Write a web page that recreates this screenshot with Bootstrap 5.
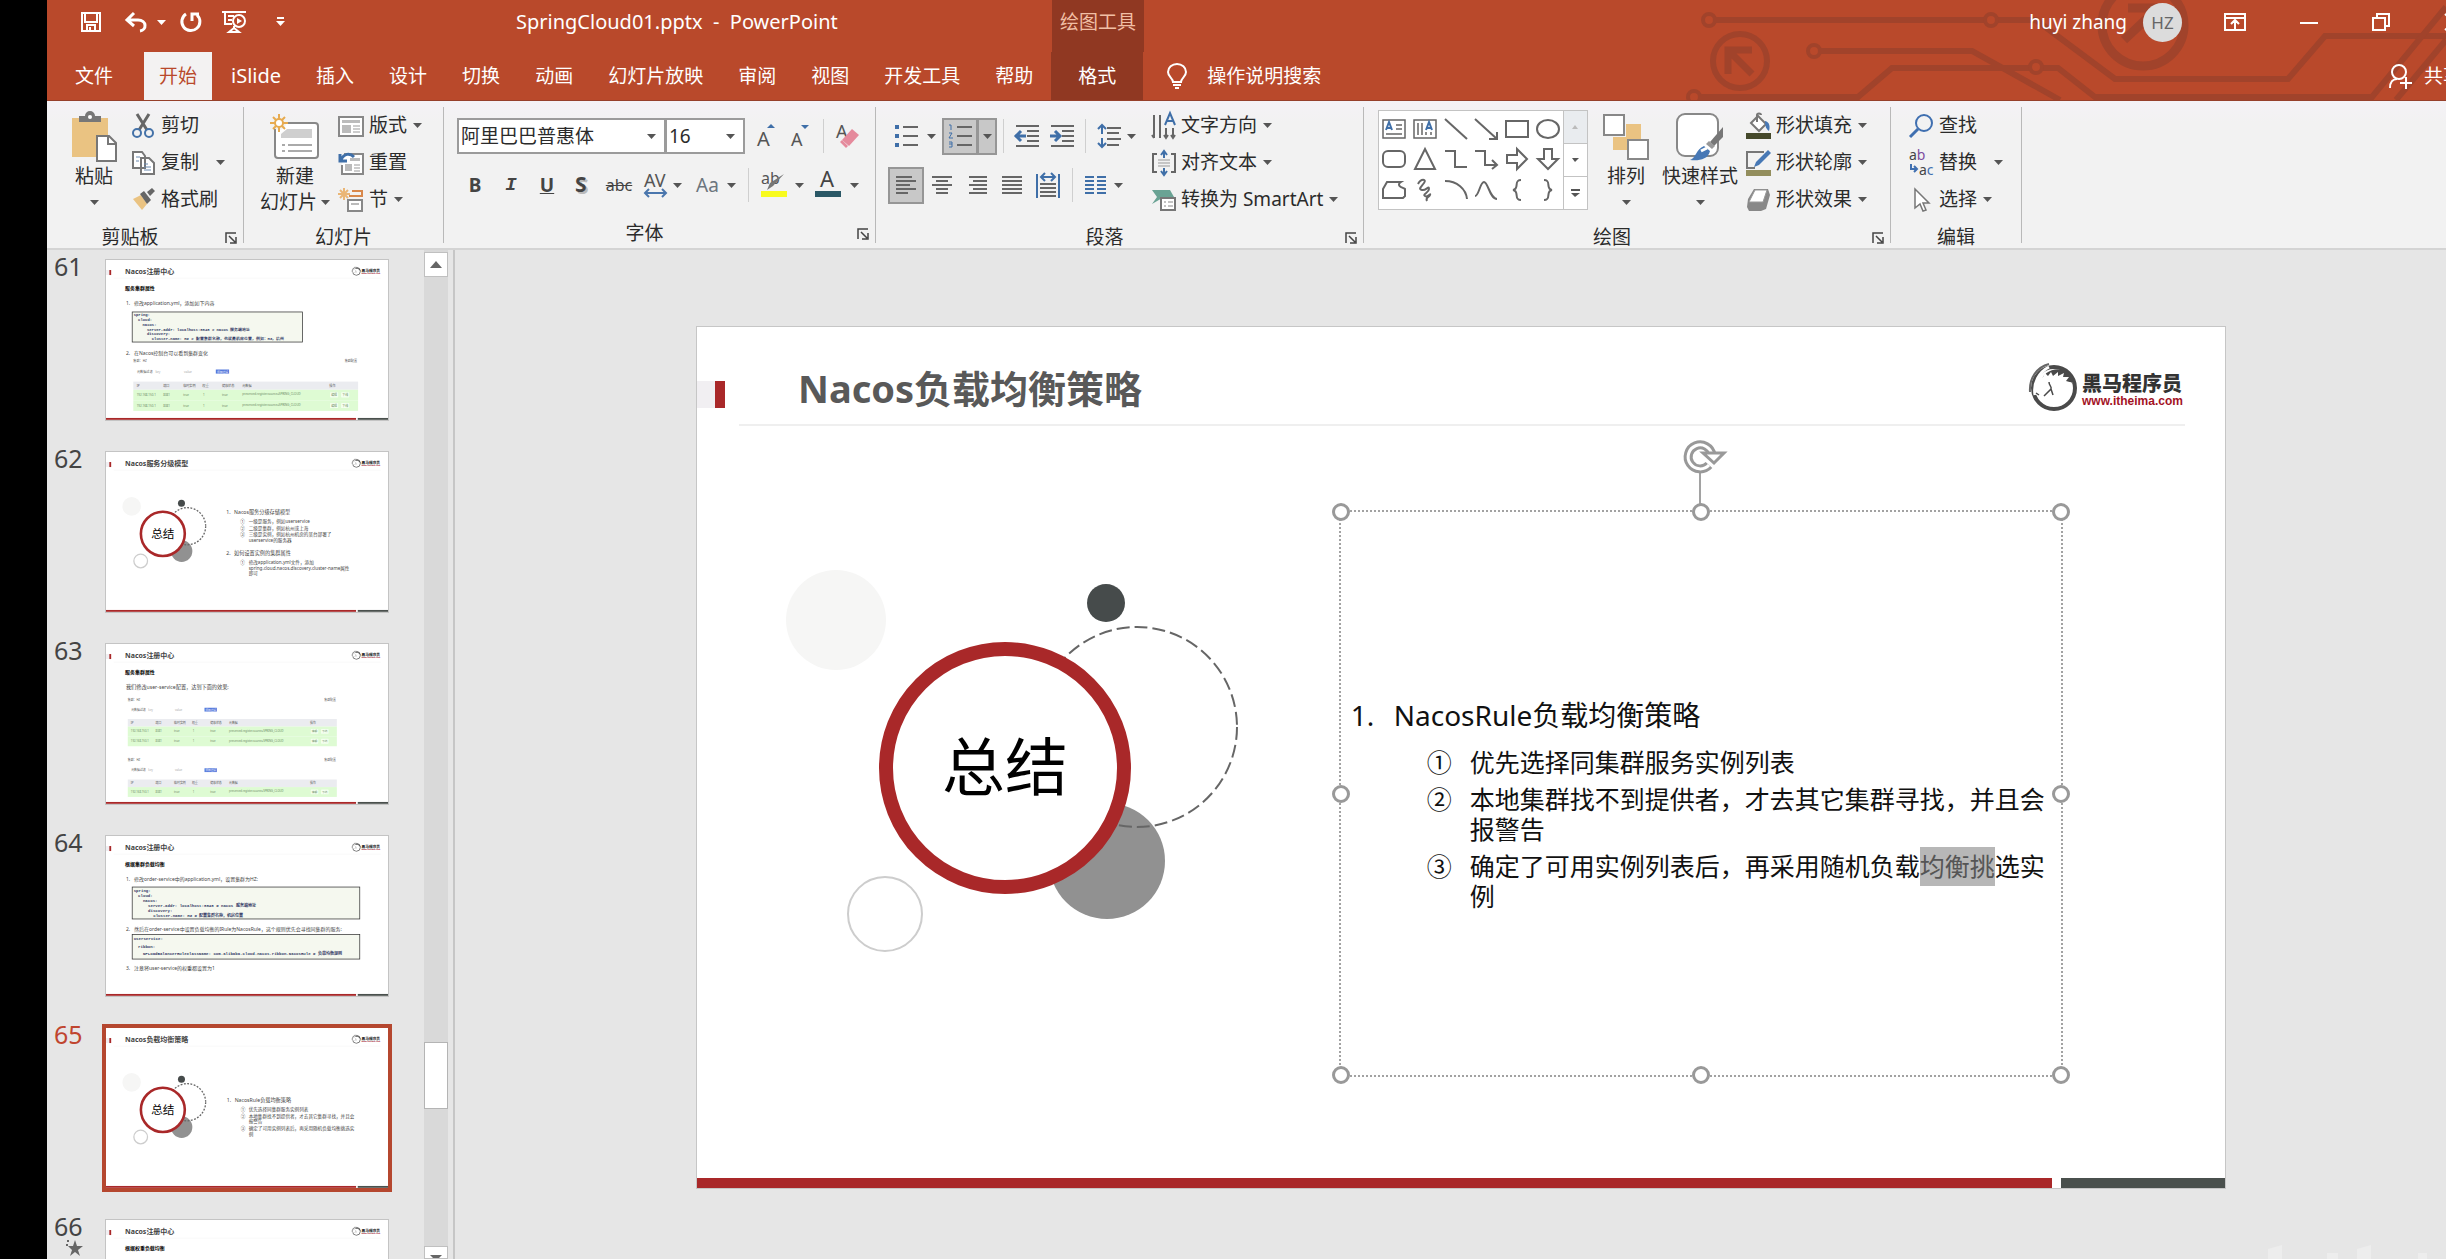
<!DOCTYPE html>
<html lang="zh-CN">
<head>
<meta charset="utf-8">
<meta name="viewport" content="width=device-width, initial-scale=1">
<title>SpringCloud01.pptx - PowerPoint</title>
<link rel="stylesheet" href="https://cdn.jsdelivr.net/npm/bootstrap@5.3.0/dist/css/bootstrap.min.css">
<style>
:root{--brand:#b9492b;--brand-dark:#903822;--ink:#2b2b2b}
body{font-family:"Noto Sans","Noto Sans CJK SC",sans-serif;font-size:19px;line-height:1;color:var(--ink);background:#000;padding-left:47px}
.app{background:#e6e6e6}
button{background:none;border:0;padding:0;color:inherit;font:inherit;line-height:1;display:flex;align-items:center;white-space:nowrap}
svg{display:block;flex:none;overflow:visible}
.caret{width:9px;height:5px;fill:#555}
.caret-light{fill:#fff}
.s2{margin-left:2px}.s5{margin-left:5px}.s6{margin-left:6px}.s8{margin-left:8px}.s9{margin-left:9px}.s11{margin-left:11px}.s12{margin-left:12px}.s14{margin-left:14px}.s20{margin-left:20px}.s42{margin-left:42px}.s54{margin-left:54px}
.latin{font-size:20px}
/* title area */
.top-area{background:var(--brand);color:#fff;height:101px;position:relative;overflow:hidden;border-bottom:1px solid #96402b}
.circuit{position:absolute;right:0;top:0}
.title-row{height:44px;position:relative}
.quick{width:469px;padding-left:34px}
.doc-name{width:536px}
.ctx-title{width:92px;background:var(--brand-dark);color:#f1bfa5;height:52px;align-self:flex-start;padding-bottom:8px}
.avatar-dot{width:39px;height:39px;border-radius:50%;background:#dcdcdc;color:#666;font-size:17px}
.tab-row{height:48px;margin-top:8px;position:relative}
.rib-tab{color:#fff;text-decoration:none;height:48px;padding:0 17px;margin-right:1px;display:flex;align-items:center;white-space:nowrap}
.file-tab{padding:0 28px;margin-right:3px}
.active-tab{background:#f3f2f2;color:var(--brand);padding:0 15px;margin-right:2px}
.ctx-tab{background:var(--brand-dark);width:92px;padding:0;justify-content:center;margin:0}
.over-edge{margin-right:-16px}
/* ribbon */
.ribbon{height:149px;background:linear-gradient(#f4f2f6,#f2f2f2 22px);border-bottom:2px solid #d4d4d4}
.grp{height:136px;margin-top:6px;border-right:1px solid #b9b9b9;display:flex;flex-direction:column;flex:none}
.grp-body{height:109px;display:flex}
.grp-foot{flex:1;display:flex;align-items:center;padding-top:12px}
.grp-foot span{flex:1;text-align:center}
.grp-foot button{width:30px;height:12px;padding-left:12px}
.g-clip{width:197px}.g-clip .grp-body{padding-left:21px}
.g-slide{width:200px}.g-slide .grp-body{padding-left:13px}
.g-font{width:432px}.g-font .grp-body{padding-left:13px}
.g-para{width:488px}.g-para .grp-body{padding-left:12px}
.g-draw{width:527px}.g-draw .grp-body{padding-left:14px}
.g-edit{width:131px}.g-edit .grp-body{padding-left:18px}
.big{flex-direction:column;width:52px;padding-top:4px}
.big .pic{height:52px;display:flex;align-items:center}
.big .ln{height:26px;display:flex;align-items:center;gap:4px}
.big-m{width:76px}.big-l{width:80px}
.col3{display:flex;flex-direction:column;height:111px}
.col3 button{height:37px;gap:5px}
.col3 .caret{margin-left:1px}
.far .caret{margin-left:12px}
.two{padding-top:11px;display:flex;flex-direction:column;gap:13px}
.rw{height:36px;display:flex;align-items:center}
.bar{width:1px;height:34px;background:#cfcfcf}
.chr{width:36px;justify-content:center;color:#444;height:36px}
.combo{height:36px;border:2px solid #9b9b9b;border-radius:0;background:#fff url("data:image/svg+xml,%3Csvg xmlns='http://www.w3.org/2000/svg' width='9' height='5'%3E%3Cpath d='M0 0h9L4.5 5z' fill='%23555'/%3E%3C/svg%3E") no-repeat right 8px center;appearance:none;padding:0 2px;color:var(--ink);font:inherit;line-height:1}
.combo-font{width:209px}.combo-size{width:80px;margin-left:-1px}
.on{background:#c8c8c8;border:2px solid #969696;justify-content:center;height:37px}
.on-a{width:36px}.on-b{width:20px;margin-left:-1px}
.para-l{width:264px}
.gallery{width:210px;height:100px;margin-top:3px;background:#fff;border:1px solid #c3c3c3;display:flex}
.gallery-grid{flex:1;display:grid;grid-template-columns:repeat(6,1fr);padding:3px 0 3px 0}
.gallery-grid button{justify-content:center}
.gallery-side{width:24px;display:flex;flex-direction:column}
.gallery-side button{flex:1;justify-content:center;border:1px solid #c3c3c3;border-width:0 0 1px 1px}
.gallery-side button:last-child{border-bottom:0}
.ln1{fill:none;stroke:#666;stroke-width:2}
.bl{stroke:#3f6fa8}
/* slide list */
.thumbs{width:377px;overflow:hidden;padding:10px 0 0 7px}
.thumb-item{height:192px;flex:none;display:flex}
.thumb-no{width:52px;font-size:25px;line-height:26px;margin-top:-7px;color:#444}
.thumb-pic{width:282px;height:160px;background:#fff;box-shadow:0 0 0 1px #c4c4c4;--thin:7px;--dash:10px 8px}
.sel .thumb-no{color:#c0452f}
.sel .thumb-pic{box-shadow:none;outline:4px solid #b5472f}
.scroll-col{width:24px;background:#d9d9d9;padding-top:2px}
.scroll-col button{width:24px;height:25px;background:#fff;border:1px solid #c0c0c0;justify-content:center}
.thumb-handle{height:67px;background:#fff;border:1px solid #b4b4b4;margin-top:765px}
.pane-edge{width:7px;border-right:2px solid #c6c6c6}
svg text{white-space:pre}
.thin{stroke-width:var(--thin,2px)}
.dashed{stroke-dasharray:var(--dash,13px 5px)}
/* slide */
.stage{padding:77px 221px 0 242px}
.slide{position:relative;aspect-ratio:1528/861;background:#fff;box-shadow:0 0 0 1px #c6c6c6}
.slide-art{position:absolute;inset:0;width:100%;height:100%}
.slide-title{position:relative;font-size:38px;font-weight:700;line-height:48px;color:#595959;margin:0;padding:37px 0 0 101px}
.slide-box{position:absolute;left:42%;top:21.3%;width:47.4%;height:65.8%;border:2px dotted #a2a2a2;padding:186px 8px 0 10px;color:#111}
.slide-box ol{list-style:none;margin:0;padding:0}
.lv1{font-size:28px;line-height:34px}
.lv1>li>div{display:flex}
.lv1>li>div>b{font-weight:400;width:43px}
.lv2{font-size:25px;line-height:30px;padding:8px 0 0 76px!important}
.lv2 li{display:flex;margin-top:7px}
.lv2 li>b{font-weight:400;width:43px;flex:none}
.picked{background:#b7b7b7;color:#555;box-shadow:0 3px #b7b7b7,0 -2px #b7b7b7}
.knob{position:absolute;width:18px;height:18px;border:3px solid #999;border-radius:50%;background:#fff;transform:translate(-50%,-50%)}
.k-l{left:0}.k-c{left:50%}.k-r{left:100%}.k-t{top:0}.k-m{top:50%}.k-b{top:100%}
.turn{position:absolute;left:50%;top:-74px;margin-left:-18px}
.mark-frag{position:absolute;right:0;bottom:0}
</style>
<script src="https://cdn.jsdelivr.net/npm/bootstrap@5.3.0/dist/js/bootstrap.bundle.min.js"></script>
</head>
<body class="vh-100 overflow-hidden">
<svg width="0" height="0" class="position-absolute" aria-hidden="true">
<defs>
<symbol id="caret" viewBox="0 0 9 5"><path d="M0 0h9L4.500 5z"/></symbol>
<symbol id="launch" viewBox="0 0 12 12"><path d="M1 11V1h10M4 4l6 6M11 5v6H5" fill="none" stroke="#444" stroke-width="1.500"/></symbol>
<g id="logo">
<circle cx="25" cy="24" r="21" fill="none" stroke="#4a4a4a" stroke-width="4"/>
<path d="M11 20C13 8 25 3 34 6c8 3 12 9 13 17l-6-5z" fill="#4a4a4a"/>
<path d="M5 31C5 20 10 14 14 13l2-4 3 3 3-4 2 4 5-4v4l6-3-1 4 6 0-3 4 7 2-6 3c4 8-2 18-14 18-9 0-15-5-15-11z" fill="#fff"/>
<path d="M6 31C4 19 10 8 20 3" fill="none" stroke="#fff" stroke-width="3"/>
<path d="M1 28C0 14 8 3 20 0" fill="none" stroke="#666" stroke-width="2"/>
<path d="M20 18c0 4 3 4 2 7l-7 7M22 25l2 6M7 29l3 2" fill="none" stroke="#4a4a4a" stroke-width="1.500"/>
<text x="53" y="27" font-size="20" font-weight="900" fill="#333">黑马程序员</text>
<text x="53" y="41" font-size="12" font-weight="700" font-family="Liberation Sans" fill="#a3121f">www.itheima.com</text>
</g>
<g id="frame">
<rect y="54" width="18" height="27" fill="#f1eff2"/><rect x="18" y="54" width="10" height="27" fill="#a92829"/>
<path d="M42 98H1488" stroke="#efefef" stroke-width="2"/>
<rect y="851" width="1355" height="10" fill="#a92829"/><rect x="1364" y="851" width="164" height="10" fill="#4a504d"/>
<use href="#logo" x="1332" y="37"/>
</g>
<g id="rings">
<circle cx="139" cy="293" r="50" fill="#f6f6f5"/><circle cx="409" cy="276" r="19" fill="#464b4b"/>
<circle cx="410" cy="534" r="58" fill="#919191"/>
<circle class="thin dashed" cx="440" cy="400" r="100" fill="none" stroke="#666"/>
<circle cx="308" cy="441" r="119" fill="#fff" stroke="#a92829" stroke-width="14"/>
<circle class="thin" cx="188" cy="587" r="37" fill="none" stroke="#cdcdcd"/>
<text x="308" y="463" font-size="63" text-anchor="middle" fill="#000">总结</text>
</g>
<g id="svc" font-size="17" fill="#555">
<text x="0" y="8">集群：HZ</text><text x="1145" y="8">集群配置</text>
<text x="20" y="68">元数据过滤</text><text x="120" y="68" fill="#aaa">key</text><text x="275" y="68" fill="#aaa">value</text>
<rect x="447" y="50" width="72" height="22" fill="#5578dc"/><text x="453" y="67" font-size="15" fill="#fff">添加过滤</text>
<rect y="115" width="1218" height="44" fill="#ebecf0"/>
<text x="18" y="143">IP</text><text x="162" y="143">端口</text><text x="270" y="143">临时实例</text><text x="374" y="143">权重</text><text x="480" y="143">健康状态</text><text x="590" y="143">元数据</text><text x="1062" y="143">操作</text>
</g>
<g id="svcRow" font-size="16" fill="#6b8a63">
<rect width="1218" height="57" fill="#defbd3"/>
<text x="18" y="34">192.168.150.1</text><text x="162" y="34">8081</text><text x="270" y="34">true</text><text x="378" y="34">1</text><text x="480" y="34">true</text><text x="590" y="30">preserved.register.source=SPRING_CLOUD</text>
<rect x="1066" y="14" width="44" height="28" rx="4" fill="#f4fff0"/><text x="1072" y="34">编辑</text><rect x="1126" y="14" width="44" height="28" rx="4" fill="#f4fff0"/><text x="1132" y="34">下线</text>
</g>
</defs>
</svg>

<div class="app vh-100 d-flex flex-column overflow-hidden">
<header class="top-area flex-shrink-0">
<svg class="circuit" width="780" height="100" viewBox="0 0 780 100" fill="none" stroke="#a1432b" stroke-width="6">
<circle cx="43" cy="20" r="6" stroke-width="4"/><path d="M50 20H318M332 20h38l79 59h173l37-43h121"/><circle cx="325" cy="20" r="6" stroke-width="4"/>
<circle cx="148" cy="51" r="6" stroke-width="4"/><path d="M155 51h151l88 49"/>
<circle cx="28" cy="97" r="6" stroke-width="4"/><path d="M35 97h157l34-29h137M377 68h15l37 29h277l74-90M730 100l50-60"/><circle cx="370" cy="67" r="6" stroke-width="4"/>
<circle cx="74" cy="61" r="27"/><path d="M62 74V50h24M64 52l22 22" stroke-width="7"/>
<circle cx="477" cy="25" r="41" stroke-width="9"/><path d="M462 8h30v30M490 10l-32 30" stroke-width="9"/>
</svg>
<div class="title-row d-flex align-items-center">
<div class="quick d-flex align-items-center">
<button aria-label="保存"><svg width="20" height="20" viewBox="0 0 20 20" fill="none" stroke="#fff" stroke-width="2"><path d="M1 1h18v18H1zM4 1v9h12V1M6 19v-6h8v6M9 15v3"/></svg></button>
<button class="ms-4" aria-label="撤消"><svg width="23" height="20" viewBox="0 0 23 20"><path d="M9 1 2 8l7 6M3 8h10c9 0 9 10 2 11" fill="none" stroke="#fff" stroke-width="3"/></svg><svg class="caret caret-light s9"><use href="#caret"/></svg></button>
<button class="s14" aria-label="恢复"><svg width="22" height="20" viewBox="0 0 22 20"><path d="M6 2a9 9 0 1 0 11 1M12 9V2h7" fill="none" stroke="#fff" stroke-width="3"/></svg></button>
<button class="s20" aria-label="从头开始"><svg width="24" height="22" viewBox="0 0 24 22" fill="none" stroke="#fff" stroke-width="2"><path d="M0 1h24M3 1v12h7M6 5h6M6 9h4M12 15v3M7 21l5-4 5 4z"/><circle cx="17" cy="10" r="6"/><path d="M15 7v6l5-3z" fill="#fff" stroke="none"/></svg></button>
<button class="ms-4" aria-label="自定义"><svg class="s6" width="9" height="10" viewBox="0 0 9 10"><path d="M1 1h7" stroke="#fff" stroke-width="2"/><path d="M0 4h9L4.500 9z" fill="#fff"/></svg></button>
</div>
<div class="doc-name latin">SpringCloud01.pptx&nbsp; -&nbsp; PowerPoint</div>
<div class="ctx-title d-flex align-items-center justify-content-center">绘图工具</div>
<div class="ms-auto d-flex align-items-center">
<span>huyi zhang</span><span class="avatar-dot ms-3 d-flex align-items-center justify-content-center">HZ</span>
<button class="s42" aria-label="功能区显示选项"><svg width="22" height="18" viewBox="0 0 22 18" fill="none" stroke="#fff" stroke-width="2"><path d="M1 1h20v16H1zM1 5h20M11 16V8M7 11l4-4 4 4"/></svg></button>
<button class="s54" aria-label="最小化"><svg width="18" height="18"><path d="M0 10h18" stroke="#fff" stroke-width="2"/></svg></button>
<button class="s54" aria-label="还原"><svg width="18" height="18" viewBox="0 0 18 18" fill="none" stroke="#fff" stroke-width="2"><path d="M1 5h12v12H1zM5 5V1h12v12h-4"/></svg></button>
<button class="ms-5" aria-label="关闭"><svg width="8" height="18"><path d="M7 1 24 17M24 1 7 17" stroke="#fff" stroke-width="2"/></svg></button>
</div>
</div>
<nav class="tab-row d-flex" aria-label="功能区">
<a class="rib-tab file-tab" href="#">文件</a><a class="rib-tab active-tab" href="#" aria-current="page">开始</a>
<a class="rib-tab latin" href="#">iSlide</a><a class="rib-tab" href="#">插入</a><a class="rib-tab" href="#">设计</a><a class="rib-tab" href="#">切换</a><a class="rib-tab" href="#">动画</a><a class="rib-tab" href="#">幻灯片放映</a><a class="rib-tab" href="#">审阅</a><a class="rib-tab" href="#">视图</a><a class="rib-tab" href="#">开发工具</a><a class="rib-tab" href="#">帮助</a><a class="rib-tab ctx-tab" href="#">格式</a>
<button class="ms-4"><svg width="20" height="26" viewBox="0 0 20 26" fill="none" stroke="#fff" stroke-width="2"><path d="M6 19c0-4-5-5-5-10a9 8 0 0 1 18 0c0 5-5 6-5 10zM6 22h8M8 25h4"/></svg><span class="s20">操作说明搜索</span></button>
<button class="ms-auto over-edge" aria-label="共享"><svg width="23" height="25" viewBox="0 0 23 25" fill="none" stroke="#fff" stroke-width="2"><circle cx="10" cy="8" r="7"/><path d="M1 24c0-6 3-9 7-9M11 19h12M17 13v12"/></svg><span class="s12">共享</span></button>
</nav>
</header>

<div class="ribbon d-flex overflow-hidden flex-shrink-0">
<section class="grp g-clip"><div class="grp-body">
<button class="big"><span class="pic"><svg width="44" height="50" viewBox="0 0 44 50"><path d="M0 6h36v39H0z" fill="#eac382"/><path d="M7 10V4h6a5 5 0 0 1 10 0h6v6z" fill="#777"/><circle cx="18" cy="5" r="2" fill="#fff"/><path d="M25 24h12l7 7v18H25z" fill="#fff" stroke="#777" stroke-width="2"/><path d="M36 24v8h8" fill="none" stroke="#777" stroke-width="2"/></svg></span><span class="ln">粘贴</span><span class="ln"><svg class="caret"><use href="#caret"/></svg></span></button>
<div class="col3 s12">
<button><svg width="24" height="24" viewBox="0 0 24 24" fill="none"><path d="M5 0l10 16M17 0 7 16" stroke="#666" stroke-width="3"/><circle cx="5" cy="19" r="4" stroke="#4472a8" stroke-width="2"/><circle cx="17" cy="19" r="4" stroke="#4472a8" stroke-width="2"/></svg>剪切</button>
<button class="far"><svg width="24" height="24" viewBox="0 0 24 24" fill="#fff" stroke="#777" stroke-width="2"><path d="M1 1h9l3 4v12H1zM9 7h8l5 5v11H9z"/><path d="M4 6h4M4 10h3M12 13h4M12 16h7M12 19h7" stroke="#6a8ab0" stroke-width="1"/></svg>复制<svg class="caret"><use href="#caret"/></svg></button>
<button><svg width="24" height="22" viewBox="0 0 24 22"><path d="M1 10l8-4 6 9-5 6z" fill="#eac382"/><path d="M8 5l4-3 7 9-4 4zM15 3l5-4 3 3-5 5z" fill="#666"/></svg>格式刷</button></div></div>
<div class="grp-foot"><span>剪贴板</span><button aria-label="剪贴板设置"><svg width="12" height="12"><use href="#launch"/></svg></button></div></section>

<section class="grp g-slide"><div class="grp-body">
<button class="big big-m"><span class="pic"><svg width="50" height="46" viewBox="0 0 50 46"><rect x="5" y="9" width="43" height="35" rx="3" fill="#fff" stroke="#888" stroke-width="2"/><path d="M17 15h25v9H11v-4z" fill="#cfcfcf"/><path d="M12 31h3M18 31h24M12 37h3M18 37h24" stroke="#aaa" stroke-width="2"/><circle cx="9" cy="9" r="7" fill="#f2f2f2"/><path d="M9 0v18M0 9h18M3 3l12 12M15 3 3 15" stroke="#e7ab50" stroke-width="2"/><circle cx="9" cy="9" r="4" fill="#fff" stroke="#e7ab50" stroke-width="2"/></svg></span><span class="ln">新建</span><span class="ln">幻灯片<svg class="caret"><use href="#caret"/></svg></span></button>
<div class="col3 s5">
<button><svg width="26" height="22" viewBox="0 0 26 22"><path d="M1 2h24v19H1z" fill="#fff" stroke="#888" stroke-width="2"/><path d="M4 5h18v3H4zM4 10h9v8H4z" fill="#bbb"/><path d="M15 11h7M15 14h7M15 17h7" stroke="#999"/></svg>版式<svg class="caret"><use href="#caret"/></svg></button>
<button><svg width="26" height="24" viewBox="0 0 26 24"><path d="M6 3h19v20H4v-9" fill="#fff" stroke="#888" stroke-width="2"/><path d="M12 7h10v3H12zM7 13h7v7H7z" fill="#bbb"/><path d="M16 14h6M16 17h6M16 20h6" stroke="#999"/><path d="M2 3v7h7M3 9c3-7 9-7 13-3" fill="none" stroke="#3f6fa8" stroke-width="3"/></svg>重置</button>
<button><svg width="26" height="24" viewBox="0 0 26 24"><path d="M14 3h10v5H11" fill="none" stroke="#d8884b" stroke-width="2"/><path d="M10 12h14v11H10z" fill="#fff" stroke="#888" stroke-width="2"/><path d="M13 15h8v2h-8z" fill="#bbb"/><path d="M6 0v12M0 6h12M2 2l8 8M10 2l-8 8" stroke="#eab676" stroke-width="2"/></svg>节<svg class="caret"><use href="#caret"/></svg></button></div></div>
<div class="grp-foot"><span>幻灯片</span></div></section>

<section class="grp g-font"><div class="grp-body"><div class="two">
<div class="rw"><select class="combo combo-font" aria-label="字体"><option>阿里巴巴普惠体</option></select><select class="combo combo-size" aria-label="字号"><option>16</option></select>
<button class="s12" aria-label="增大字号"><svg width="20" height="24"><text x="0" y="22" font-size="20" fill="#555">A</text><path d="M10 4l4-4 4 4z" fill="#3f6fa8"/></svg></button>
<button class="s14" aria-label="减小字号"><svg width="20" height="24"><text x="0" y="22" font-size="18" fill="#555">A</text><path d="M10 1h8l-4 4z" fill="#3f6fa8"/></svg></button>
<span class="bar s12"></span>
<button class="s12" aria-label="清除格式"><svg width="24" height="26"><text x="0" y="15" font-size="18" fill="#555">A</text><path d="M6 17 16 6l7 6-10 11z" fill="#e58a9c"/><path d="M4 19l2-2 6 6-2 2z" fill="#e58a9c"/></svg></button></div>
<div class="rw"><button class="chr fw-bold">B</button><button class="chr fw-bold fst-italic font-monospace">I</button><button class="chr fw-bold text-decoration-underline">U</button><button class="chr fw-bold"><svg width="18" height="22"><text x="3" y="20" font-size="21" fill="#bbb" aria-hidden="true">S</text><text x="1" y="18" font-size="21" fill="#444">S</text></svg></button><button class="chr text-decoration-line-through fs-6">abc</button><button class="chr" aria-label="字符间距"><svg width="23" height="26"><text x="0" y="15" font-size="18" fill="#555">AV</text><path d="M1 21h21M5 17l-4 4 4 4M18 17l4 4-4 4" fill="none" stroke="#4a76ad" stroke-width="2"/></svg></button><svg class="caret"><use href="#caret"/></svg>
<button class="s14 text-secondary" aria-label="更改大小写">Aa</button><svg class="caret s8"><use href="#caret"/></svg><span class="bar s12"></span>
<button class="s12" aria-label="突出显示"><svg width="26" height="28"><text x="0" y="13" font-size="16" fill="#555">ab</text><path d="M23 3 12 15l-6 4 3-7z" fill="#777"/><path d="M0 20h26v6H0z" fill="#f8fb1e"/></svg></button><svg class="caret s8"><use href="#caret"/></svg>
<button class="s11" aria-label="字体颜色"><svg width="26" height="28"><text x="5" y="16" font-size="22" fill="#444">A</text><path d="M0 20h26v6H0z" fill="#2a5866"/></svg></button><svg class="caret s9"><use href="#caret"/></svg></div>
</div></div><div class="grp-foot"><span>字体</span><button aria-label="字体设置"><svg width="12" height="12"><use href="#launch"/></svg></button></div></section>

<section class="grp g-para"><div class="grp-body"><div class="two para-l">
<div class="rw"><button class="s6" aria-label="项目符号"><svg width="24" height="24" class="ln1"><path d="M9 3h15M9 12h15M9 21h15"/><path d="M1 3h4M1 12h4M1 21h4" class="bl" stroke-width="4"/></svg></button><svg class="caret s9"><use href="#caret"/></svg>
<button class="on on-a s6" aria-label="编号"><svg width="24" height="24" class="ln1"><path d="M9 3h15M9 12h15M9 21h15"/><path d="M1 1h2v5M1 9h3l-3 5h4M1 18h3v5H1M1 20h3" class="bl" stroke-width="1"/></svg></button><button class="on on-b" aria-label="编号选项"><svg class="caret"><use href="#caret"/></svg></button><span class="bar s6"></span>
<button class="s11" aria-label="减少缩进"><svg width="24" height="24" class="ln1"><path d="M1 2h23M12 7h12M12 12h12M12 17h12M1 22h23"/><path d="M0 12h11M6 7l-5 5 5 5" class="bl" stroke-width="3"/></svg></button>
<button class="s11" aria-label="增加缩进"><svg width="24" height="24" class="ln1"><path d="M1 2h23M12 7h12M12 12h12M12 17h12M1 22h23"/><path d="M0 12h10M5 7l5 5-5 5" class="bl" stroke-width="3"/></svg></button><span class="bar s11"></span>
<button class="s11" aria-label="行距"><svg width="24" height="26" class="ln1"><path d="M10 5h14M10 10h12M10 16h14M10 22h12"/><path d="M5 2v9M5 15v9M1 6l4-4 4 4M1 20l4 4 4-4" class="bl"/></svg></button><svg class="caret s6"><use href="#caret"/></svg></div>
<div class="rw"><button class="on on-a" aria-label="左对齐"><svg width="22" height="20" class="ln1"><path d="M1 2h16M1 6h20M1 10h14M1 14h20M1 18h12"/></svg></button>
<button class="s6" aria-label="居中"><svg width="24" height="20" class="ln1"><path d="M2 2h20M6 6h12M2 10h20M6 14h12M6 18h12"/></svg></button>
<button class="s11" aria-label="右对齐"><svg width="24" height="20" class="ln1"><path d="M4 2h18M8 6h14M4 10h18M8 14h14M4 18h18"/></svg></button>
<button class="s11" aria-label="两端对齐"><svg width="24" height="20" class="ln1"><path d="M2 2h20M2 6h20M2 10h20M2 14h20M2 18h20"/></svg></button>
<button class="s12" aria-label="分散对齐"><svg width="24" height="26" class="ln1"><path d="M4 12h16M4 16h16M4 20h16M4 24h16"/><path d="M1 2v24M23 2v24M5 5h14M9 1L5 5l4 4M15 1l4 4-4 4" class="bl"/></svg></button><span class="bar s12"></span>
<button class="s11" aria-label="分栏"><svg width="24" height="20" class="ln1"><path d="M1 2h9M1 6h9M1 10h9M1 14h9M1 18h9M13 2h9M13 6h9M13 10h9M13 14h9M13 18h9" class="bl"/></svg></button><svg class="caret s6"><use href="#caret"/></svg></div></div>
<div class="col3">
<button><svg width="24" height="26" class="ln1"><path d="M2 2v23M8 2v23M14 15v10M21 15v10M0 22l2 3M12 22l2 3 2-3M19 22l2 3 2-3"/><path d="M13 12l5-12 5 12M15 8h6" class="bl"/></svg>文字方向<svg class="caret"><use href="#caret"/></svg></button>
<button><svg width="24" height="24" class="ln1"><path d="M5 3H1v18h4M19 3h4v18h-4"/><path d="M6 12h12M6 9h12M6 15h12" stroke="#999" stroke-width="1"/><path d="M12 0v7M12 17v7M9 4l3-4 3 4M9 20l3 4 3-4" class="bl"/></svg>对齐文本<svg class="caret"><use href="#caret"/></svg></button>
<button><svg width="24" height="22" viewBox="0 0 24 22"><path d="M0 1h18l4 7H12L0 15l5-7z" fill="#6aa394"/><path d="M9 9h14v12H9z" fill="#fff" stroke="#777" stroke-width="2"/><path d="M12 13h2M16 13h5M12 17h2M16 17h5" stroke="#888"/></svg>转换为 SmartArt<svg class="caret"><use href="#caret"/></svg></button></div></div>
<div class="grp-foot"><span>段落</span><button aria-label="段落设置"><svg width="12" height="12"><use href="#launch"/></svg></button></div></section>

<section class="grp g-draw"><div class="grp-body">
<div class="gallery"><div class="gallery-grid">
<button aria-label="文本框"><svg width="24" height="20" class="ln1"><path d="M1 1h22v18H1zM14 6h6M14 10h6M4 15h16" stroke-width="1.500"/><path d="M4 11l3-8 3 8M5 9h4" class="bl"/></svg></button>
<button aria-label="竖排文本框"><svg width="24" height="20" class="ln1"><path d="M1 1h22v18H1zM5 4v12M9 4v12M13 13v3M18 13v3" stroke-width="1.500"/><path d="M13 11l3-8 3 8M14 9h4" class="bl"/></svg></button>
<button aria-label="直线"><svg width="24" height="22" class="ln1"><path d="M1 1l22 20"/></svg></button>
<button aria-label="箭头"><svg width="24" height="22" class="ln1"><path d="M1 1l22 20M23 14v7h-8"/></svg></button>
<button aria-label="矩形"><svg width="24" height="20" class="ln1"><path d="M1 2h22v16H1z"/></svg></button>
<button aria-label="椭圆"><svg width="24" height="20" class="ln1"><ellipse cx="12" cy="10" rx="11" ry="9"/></svg></button>
<button aria-label="圆角矩形"><svg width="24" height="20" class="ln1"><rect x="1" y="2" width="22" height="16" rx="5"/></svg></button>
<button aria-label="三角形"><svg width="24" height="22" class="ln1"><path d="M12 1l10 20H2z"/></svg></button>
<button aria-label="肘形连接符"><svg width="24" height="20" class="ln1"><path d="M1 2h10v16h12"/></svg></button>
<button aria-label="肘形箭头"><svg width="24" height="20" class="ln1"><path d="M1 2h10v14h12M18 11l5 5-5 4"/></svg></button>
<button aria-label="右箭头"><svg width="24" height="22" class="ln1"><path d="M2 7h10V1l10 10-10 10v-6H2z"/></svg></button>
<button aria-label="下箭头"><svg width="24" height="22" class="ln1"><path d="M8 1h8v10h6L12 21 2 11h6z"/></svg></button>
<button aria-label="任意多边形"><svg width="24" height="20" class="ln1"><path d="M5 2h14c-6 4 3 6 4 7v7l-2 2H1V9z"/></svg></button>
<button aria-label="自由曲线"><svg width="24" height="24" class="ln1"><path d="M5 6c3-6 9-5 6-1s-6 6-2 7 7-5 7-1-7 5-4 7 6-4 5-1-5 2-3 6"/></svg></button>
<button aria-label="弧形"><svg width="24" height="20" class="ln1"><path d="M1 1c12 0 21 8 22 18"/></svg></button>
<button aria-label="曲线"><svg width="24" height="20" class="ln1"><path d="M1 16C5 16 6 2 10 2s6 17 13 17"/></svg></button>
<button aria-label="左大括号"><svg width="24" height="22" class="ln1"><path d="M16 1c-8 0-1 9-8 10 7 1 0 10 8 10"/></svg></button>
<button aria-label="右大括号"><svg width="24" height="22" class="ln1"><path d="M8 1c8 0 1 9 8 10-7 1 0 10-8 10"/></svg></button>
</div><div class="gallery-side"><button class="bg-body-secondary" aria-label="上一行"><svg width="7" height="4"><path d="M0 4l3-4 3 4z" fill="#bbb"/></svg></button><button aria-label="下一行"><svg width="7" height="4"><path d="M0 0h7L3 4z" fill="#555"/></svg></button><button aria-label="更多形状"><svg width="9" height="8"><path d="M0 0h9v2H0zM0 4h9L4 8z" fill="#555"/></svg></button></div></div>
<button class="big s12"><span class="pic"><svg width="46" height="46" viewBox="0 0 46 46"><path d="M23 10h15v26H10V23h13z" fill="#eac382"/><path d="M1 1h20v20H1zM25 26h20v19H25z" fill="#fff" stroke="#888" stroke-width="2"/></svg></span><span class="ln">排列</span><span class="ln"><svg class="caret"><use href="#caret"/></svg></span></button>
<button class="big big-l s8"><span class="pic"><svg width="48" height="48" viewBox="0 0 48 48"><rect x="1" y="1" width="41" height="42" rx="8" fill="#fff" stroke="#888" stroke-width="2"/><path d="M47 14v10l-9 9-4-4z" fill="#777"/><path d="M33 28l6 5-3 3-6-5z" fill="#999"/><path d="M14 47c6-2 6-11 14-14l6 5c-2 9-12 10-20 9z" fill="#4778b5"/><path d="M25 38l6-3" stroke="#fff" stroke-width="3"/></svg></span><span class="ln">快速样式</span><span class="ln"><svg class="caret"><use href="#caret"/></svg></span></button>
<div class="col3 s6">
<button><svg width="25" height="26" viewBox="0 0 25 26"><path d="M5 10l7-7 8 8-7 7z" fill="#fff" stroke="#777" stroke-width="2"/><path d="M11 9V2c0-2 4-2 4 0" fill="none" stroke="#777" stroke-width="2"/><path d="M19 8c5 1 5 6 4 10-3-2-4-5-4-10z" fill="#4778b5"/><path d="M0 20h25v6H0z" fill="#45492b"/></svg>形状填充<svg class="caret"><use href="#caret"/></svg></button>
<button><svg width="25" height="26" viewBox="0 0 25 26"><path d="M18 2H1v16h8" fill="none" stroke="#777" stroke-width="2"/><path d="M22 0l3 3-12 12-5 2 2-5z" fill="#4778b5"/><path d="M0 20h25v6H0z" fill="#938e5d"/></svg>形状轮廓<svg class="caret"><use href="#caret"/></svg></button>
<button><svg width="25" height="24" viewBox="0 0 25 24"><path d="M8 1h14l2 6-4 14-5 2H3l-2-4 1-8z" fill="#888"/><path d="M9 2h12l-4 12H3z" fill="#fff" stroke="#999"/></svg>形状效果<svg class="caret"><use href="#caret"/></svg></button></div></div>
<div class="grp-foot"><span>绘图</span><button aria-label="绘图设置"><svg width="12" height="12"><use href="#launch"/></svg></button></div></section>

<section class="grp g-edit"><div class="grp-body"><div class="col3">
<button><svg width="25" height="24" viewBox="0 0 25 24" fill="none" stroke="#3f6fb0"><circle cx="15" cy="9" r="8" stroke-width="2"/><path d="M9 15l-8 8" stroke-width="3"/></svg>查找</button>
<button class="far"><svg width="25" height="28" viewBox="0 0 25 28"><text x="0" y="11" font-size="14" fill="#444">a<tspan fill="#7d4da0">b</tspan></text><text x="10" y="26" font-size="14" fill="#444">a<tspan fill="#3f6fb0">c</tspan></text><path d="M2 15v5h6M5 17l3 3-3 3" fill="none" stroke="#3f6fb0" stroke-width="2"/></svg>替换<svg class="caret"><use href="#caret"/></svg></button>
<button><svg width="25" height="24" viewBox="0 0 25 24"><path d="M6 1v19l5-4 3 7 3-1-3-7h6z" fill="#fff" stroke="#777" stroke-width="1.500"/></svg>选择<svg class="caret"><use href="#caret"/></svg></button></div></div>
<div class="grp-foot"><span>编辑</span></div></section>
</div>

<main class="flex-grow-1 d-flex overflow-hidden position-relative">
<div class="thumbs d-flex flex-column flex-shrink-0">
<div class="thumb-item"><div class="thumb-no">61</div><svg class="thumb-pic" viewBox="0 0 1528 862" preserveAspectRatio="none"><use href="#frame"/>
<text x="103" y="77" font-size="38" font-weight="700" fill="#444">Nacos注册中心</text><text x="103" y="160" font-size="27" font-weight="700">服务集群属性</text>
<g font-size="27" fill="#444"><text x="108" y="244">1.</text><text x="152" y="244">修改application.yml，添加如下内容</text><text x="108" y="514">2.</text><text x="152" y="514">在Nacos控制台可以看到集群变化</text></g>
<rect x="142" y="280" width="922" height="162" fill="#f5f8ef" stroke="#333" stroke-width="4"/>
<g font-size="21" font-weight="700" font-family="Liberation Mono" fill="#333a66"><text x="150" y="304">spring:</text><text x="174" y="330">cloud:</text><text x="198" y="355">nacos:</text><text x="222" y="380">server-addr: localhost:8848 # nacos 服务端地址</text><text x="222" y="405">discovery:</text><text x="248" y="430">cluster-name: HZ # 配置集群名称，也就是机房位置，例如：HZ，杭州</text></g>
<use href="#svc" x="148" y="540"/><use href="#svcRow" x="148" y="699"/><use href="#svcRow" x="148" y="756"/></svg></div>

<div class="thumb-item"><div class="thumb-no">62</div><svg class="thumb-pic" viewBox="0 0 1528 862" preserveAspectRatio="none"><use href="#frame"/><use href="#rings"/>
<text x="103" y="77" font-size="38" font-weight="700" fill="#444">Nacos服务分级模型</text>
<g font-size="28" fill="#444"><text x="652" y="335">1.</text><text x="694" y="335">Nacos服务分级存储模型</text><text x="652" y="555">2.</text><text x="694" y="555">如何设置实例的集群属性</text></g>
<g font-size="25" fill="#444"><text x="728" y="384">①</text><text x="773" y="384">一级是服务，例如userservice</text><text x="728" y="418">②</text><text x="773" y="418">二级是集群，例如杭州或上海</text><text x="728" y="453">③</text><text x="773" y="453">三级是实例，例如杭州机房的某台部署了</text><text x="773" y="487">userservice的服务器</text><text x="728" y="604">①</text><text x="773" y="604">修改application.yml文件，添加</text><text x="773" y="634">spring.cloud.nacos.discovery.cluster-name属性</text><text x="773" y="665">即可</text></g></svg></div>

<div class="thumb-item"><div class="thumb-no">63</div><svg class="thumb-pic" viewBox="0 0 1528 862" preserveAspectRatio="none"><use href="#frame"/>
<text x="103" y="77" font-size="38" font-weight="700" fill="#444">Nacos注册中心</text><text x="103" y="160" font-size="27" font-weight="700">服务集群属性</text>
<text x="108" y="245" font-size="28" fill="#444">我们修改user-service配置，达到下面的效果:</text>
<g transform="translate(118 297) scale(.93)"><use href="#svc"/><use href="#svcRow" y="159"/><use href="#svcRow" y="216"/></g>
<g transform="translate(118 623) scale(.93)"><use href="#svc"/><use href="#svcRow" y="159"/></g></svg></div>

<div class="thumb-item"><div class="thumb-no">64</div><svg class="thumb-pic" viewBox="0 0 1528 862" preserveAspectRatio="none"><use href="#frame"/>
<text x="103" y="77" font-size="38" font-weight="700" fill="#444">Nacos注册中心</text><text x="103" y="160" font-size="27" font-weight="700">根据集群负载均衡</text>
<g font-size="27" fill="#444"><text x="108" y="244">1.</text><text x="152" y="244">修改order-service中的application.yml，设置集群为HZ:</text><text x="108" y="512">2.</text><text x="152" y="512">然后在order-service中设置负载均衡的IRule为NacosRule，这个规则优先会寻找同集群的服务:</text><text x="108" y="721">3.</text><text x="152" y="721">注意将user-service的权重都设置为1</text></g>
<g fill="#f5f8ef" stroke="#333" stroke-width="4"><rect x="142" y="275" width="1233" height="172"/><rect x="142" y="531" width="1233" height="132"/></g>
<g font-size="22" font-weight="700" font-family="Liberation Mono" fill="#333a66"><text x="150" y="300">spring:</text><text x="174" y="327">cloud:</text><text x="200" y="354">nacos:</text><text x="228" y="381">server-addr: localhost:8848 # nacos 服务端地址</text><text x="228" y="408">discovery:</text><text x="256" y="435">cluster-name: HZ # 配置集群名称，机房位置</text><text x="150" y="562">userservice:</text><text x="174" y="602">ribbon:</text><text x="200" y="642">NFLoadBalancerRuleClassName: com.alibaba.cloud.nacos.ribbon.NacosRule # 负载均衡规则</text></g></svg></div>

<div class="thumb-item sel"><div class="thumb-no">65</div><svg class="thumb-pic" viewBox="0 0 1528 862" preserveAspectRatio="none"><use href="#frame"/><use href="#rings"/>
<text x="103" y="77" font-size="38" font-weight="700" fill="#444">Nacos负载均衡策略</text>
<g font-size="28" fill="#444"><text x="654" y="400">1.</text><text x="697" y="400">NacosRule负载均衡策略</text></g>
<g font-size="25" fill="#444"><text x="730" y="447">①</text><text x="773" y="447">优先选择同集群服务实例列表</text><text x="730" y="484">②</text><text x="773" y="484">本地集群找不到提供者，才去其它集群寻找，并且会</text><text x="773" y="514">报警告</text><text x="730" y="551">③</text><text x="773" y="551">确定了可用实例列表后，再采用随机负载均衡挑选实</text><text x="773" y="581">例</text></g></svg></div>

<div class="thumb-item"><div class="thumb-no">66<svg class="s12" width="17" height="17" viewBox="0 0 17 17"><path d="M9 1l2 6h6l-5 4 2 6-5-4-5 4 2-6-4-4h5z" fill="#666"/><path d="M1 2h2M0 6h2" stroke="#666" stroke-width="2"/></svg></div><svg class="thumb-pic" viewBox="0 0 1528 862" preserveAspectRatio="none"><use href="#frame"/>
<text x="103" y="77" font-size="38" font-weight="700" fill="#444">Nacos注册中心</text><text x="103" y="160" font-size="27" font-weight="700">根据权重负载均衡</text></svg></div>
</div>
<div class="scroll-col flex-shrink-0 d-flex flex-column"><button class="flex-shrink-0" aria-label="向上滚动"><svg width="12" height="7"><path d="M0 7l6-7 6 7z" fill="#666"/></svg></button><div class="thumb-handle flex-shrink-0"></div><button class="mt-auto flex-shrink-0 h-auto pt-2" aria-label="向下滚动"><svg width="12" height="3"><path d="M0 0h12L9 3H3z" fill="#666"/></svg></button></div>
<div class="pane-edge flex-shrink-0"></div>

<section class="stage flex-grow-1">
<article class="slide">
<svg class="slide-art" viewBox="0 0 1528 861"><use href="#frame"/><use href="#rings"/></svg>
<h1 class="slide-title">Nacos负载均衡策略</h1>
<div class="slide-box">
<ol class="lv1"><li><div><b>1.</b><span>NacosRule负载均衡策略</span></div>
<ol class="lv2"><li><b>①</b><span>优先选择同集群服务实例列表</span></li><li><b>②</b><span>本地集群找不到提供者，才去其它集群寻找，并且会报警告</span></li><li><b>③</b><span>确定了可用实例列表后，再采用随机负载<span class="picked">均衡挑</span>选实例</span></li></ol></li></ol>
<svg class="turn" width="44" height="74" viewBox="0 0 44 74" fill="none"><path d="M17 34v40" stroke="#a2a2a2" stroke-width="2"/><path d="M26 27a12 12 0 1 1 3-10" stroke="#999" stroke-width="9"/><path d="M26 27a12 12 0 1 1 3-10" stroke="#fff" stroke-width="3"/><path d="M20 15h21l-10 10z" fill="#fff" stroke="#999" stroke-width="3"/></svg>
<i class="knob k-l k-t"></i><i class="knob k-c k-t"></i><i class="knob k-r k-t"></i><i class="knob k-l k-m"></i><i class="knob k-r k-m"></i><i class="knob k-l k-b"></i><i class="knob k-c k-b"></i><i class="knob k-r k-b"></i>
</div>
</article>
</section>
<svg class="mark-frag" width="180" height="15" fill="#ededed"><path d="M2 5l14-4v14H2zM61 9h11v6H61zM91 5l14-4v14H91zM152 9h9v6h-9z"/></svg>
</main>
</div>
</body>
</html>
